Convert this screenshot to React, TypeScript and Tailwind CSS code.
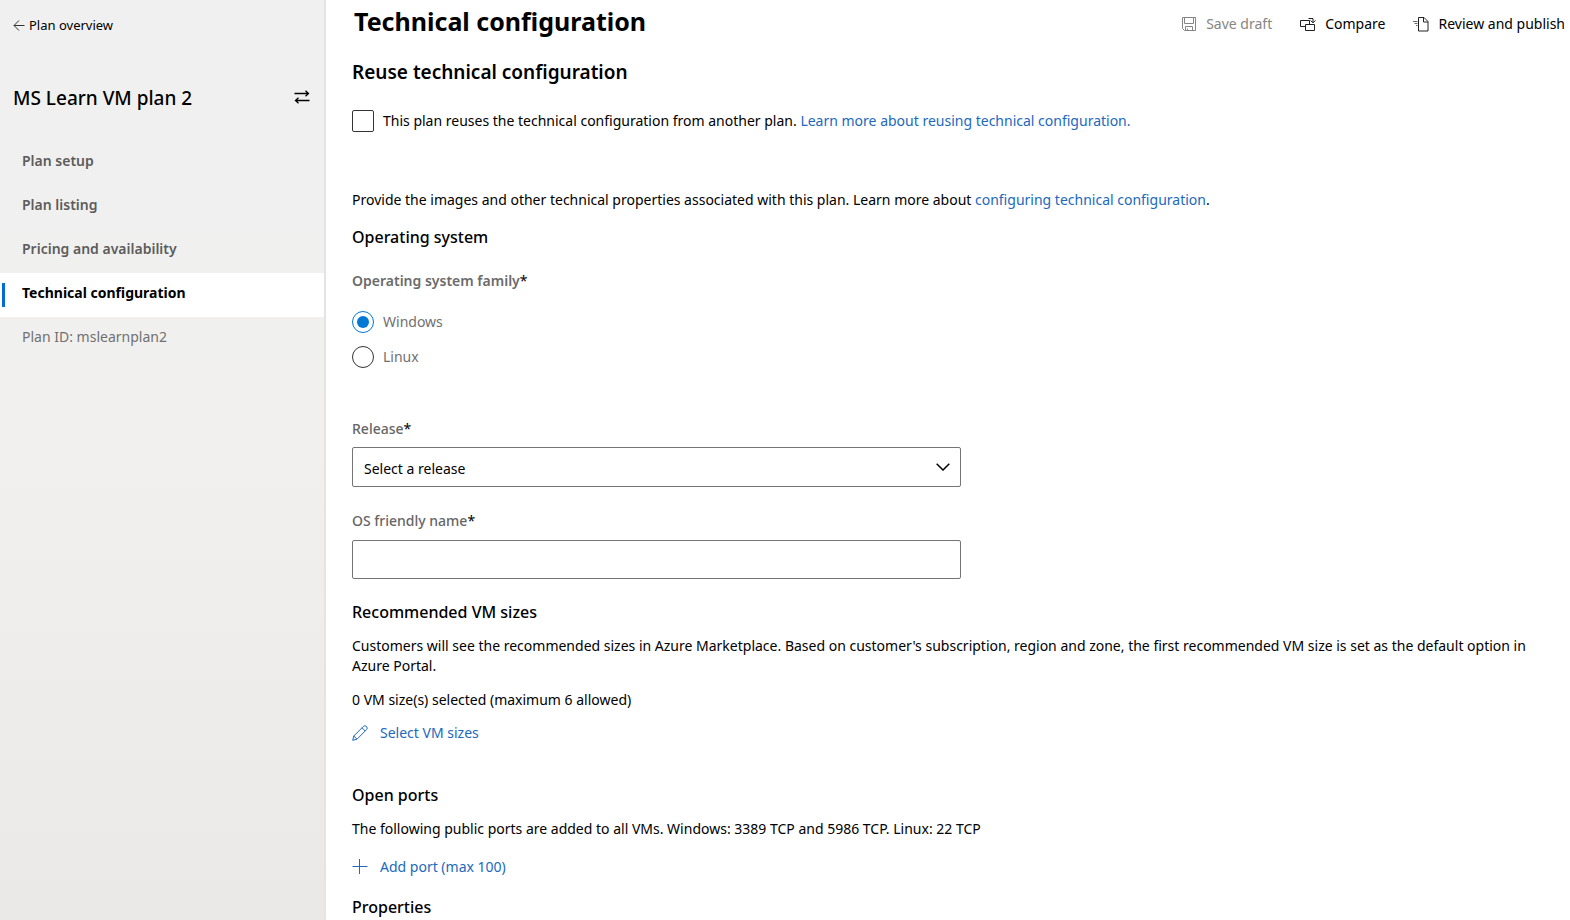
import type { ReactNode } from "react";

const linkClass = "text-[#2169bd] hover:underline";

const navItems = [
  { label: "Plan setup", active: false },
  { label: "Plan listing", active: false },
  { label: "Pricing and availability", active: false },
  { label: "Technical configuration", active: true },
];

function BackIcon() {
  return (
    <svg width="12" height="12" viewBox="0 0 12 12" fill="none" stroke="#333" strokeWidth="1" aria-hidden="true">
      <path d="M11.5 6.5H1M6 1.5l-5 5 5 5" />
    </svg>
  );
}

function SwapIcon() {
  return (
    <svg width="16" height="14" viewBox="0 0 16 14" fill="none" stroke="#000" strokeWidth="1.3" aria-hidden="true">
      <path d="M.5 3.5h14M11.5 .7l3 2.8-3 2.8M15.5 10.5h-14M4.5 7.7l-3 2.8 3 2.8" />
    </svg>
  );
}

function SaveIcon() {
  return (
    <svg width="15" height="15" viewBox="0 0 15 15" fill="none" stroke="#858585" strokeWidth="1" aria-hidden="true">
      <path d="M.5 .5h13v13h-11l-2-2zM2.5 .5v6h9v-6M3.500 13.500v-4h7v4M5.500 11.500v2" />
    </svg>
  );
}

function CompareIcon() {
  return (
    <svg width="16" height="15" viewBox="0 0 16 15" fill="none" stroke="#222" strokeWidth="1" aria-hidden="true">
      <path d="M9.500 7v-3.500h-9v6h5M5.500 7.500h9v6h-9zM8.500 1.500h4.500v4M10.500 3.500l2.500 2.200 2.500-2.200" />
    </svg>
  );
}

function PublishIcon() {
  return (
    <svg width="16" height="15" viewBox="0 0 16 15" fill="none" stroke="#222" strokeWidth="1" aria-hidden="true">
      <path d="M5.500 .5h5.500l4 4v9.500h-9.500zM10.500 .5v4.500h4.500" />
      <path d="M0 4.500h4.500M1.500 6.500h3M3 8.500h1.500" stroke="#666" />
    </svg>
  );
}

function PencilIcon() {
  return (
    <svg width="16" height="16" viewBox="0 0 16 16" fill="none" stroke="#2169bd" strokeWidth="1" strokeLinejoin="round" aria-hidden="true">
      <path d="M.7 15.300l1.100-4.300L11.300 1.500a2.200 2.200 0 0 1 3.200 3.200L5 14.200zM10 2.800L13.200 6M1.800 11L5 14.200" />
    </svg>
  );
}

function PlusIcon() {
  return (
    <svg width="16" height="16" viewBox="0 0 16 16" fill="none" stroke="#2169bd" strokeWidth="1" aria-hidden="true">
      <path d="M.5 7.500h15M7.500 0v15" />
    </svg>
  );
}

function SectionTitle({ children, className = "" }: { children: ReactNode; className?: string }) {
  return <h3 className={`text-base leading-5 font-medium ${className}`}>{children}</h3>;
}

function Required() {
  return <span className="font-normal text-black">*</span>;
}

function Radio({ label, checked = false }: { label: string; checked?: boolean }) {
  return (
    <label className="flex items-center gap-[9px] text-[#707070]">
      <input
        type="radio"
        name="os-family"
        defaultChecked={checked}
        className="size-[22px] shrink-0 appearance-none rounded-full border border-[#333] bg-white checked:border-[#0078d4] checked:bg-[#0078d4] checked:bg-clip-content checked:p-1"
      />
      {label}
    </label>
  );
}

export default function App() {
  return (
    <div className="flex min-h-screen bg-white font-['Noto_Sans',sans-serif] text-sm leading-5 text-black">
      <aside className="flex w-[326px] shrink-0 flex-col border-r-2 border-[#e4e4e4] bg-linear-to-b from-[#f0f0f0] via-[#f1f0ef] to-[#ebe9e8]">
        <a href="#overview" className="mt-[15px] ml-[13px] flex items-center gap-1 self-start text-[13px]">
          <BackIcon />
          Plan overview
        </a>
        <div className="mt-[49px] flex items-center justify-between pr-[14px] pl-[13px]">
          <h2 className="text-[19px] leading-7 font-medium">MS Learn VM plan 2</h2>
          <button type="button" aria-label="Switch plan" className="pb-[2px]">
            <SwapIcon />
          </button>
        </div>
        <nav className="mt-[29px] flex flex-col">
          {navItems.map((item) =>
            item.active ? (
              <a
                key={item.label}
                href="#technical"
                aria-current="page"
                className="flex h-11 items-center gap-[17px] bg-white pb-1 pl-[2px] font-bold"
              >
                <span className="mt-1 h-6 w-[3px] bg-[#006cd8]" />
                {item.label}
              </a>
            ) : (
              <a key={item.label} href="#plan" className="flex h-11 items-center pb-1 pl-[22px] font-semibold text-[#5c5c5c]">
                {item.label}
              </a>
            ),
          )}
          <p className="flex h-11 items-center pb-1 pl-[22px] text-[#707070]">Plan ID: mslearnplan2</p>
        </nav>
      </aside>

      <main className="min-w-0 flex-1 pr-[5px] pl-[26px]">
        <header className="flex items-center justify-between pt-[3px]">
          <h1 className="pl-[2px] text-[25px] leading-9 font-bold">Technical configuration</h1>
          <div className="flex items-center gap-7 pt-[6px]">
            <button type="button" disabled className="flex items-center gap-[9px] text-[#858585]">
              <SaveIcon />
              Save draft
            </button>
            <button type="button" className="flex items-center gap-[9px]">
              <CompareIcon />
              Compare
            </button>
            <button type="button" className="flex items-center gap-[9px]">
              <PublishIcon />
              Review and publish
            </button>
          </div>
        </header>

        <h2 className="mt-[19px] text-[19px] leading-7 font-semibold">Reuse technical configuration</h2>
        <div className="mt-6 flex items-center gap-[9px]">
          <input
            id="reuse"
            type="checkbox"
            className="size-[22px] shrink-0 appearance-none rounded-xs border border-[#333] bg-white checked:bg-[#0078d4]"
          />
          <p>
            <label htmlFor="reuse">This plan reuses the technical configuration from another plan.</label>{" "}
            <a href="#reuse-help" className={linkClass}>
              Learn more about reusing technical configuration.
            </a>
          </p>
        </div>

        <p className="mt-[58px]">
          Provide the images and other technical properties associated with this plan. Learn more about{" "}
          <a href="#configure-help" className={linkClass}>
            configuring technical configuration
          </a>
          .
        </p>

        <SectionTitle className="mt-[17px]">Operating system</SectionTitle>
        <fieldset className="mt-6">
          <legend className="font-semibold text-[#6b6b6b]">
            Operating system family
            <Required />
          </legend>
          <div className="flex flex-col items-start gap-[13px] pt-5">
            <Radio label="Windows" checked />
            <Radio label="Linux" />
          </div>
        </fieldset>

        <div className="mt-[51px] flex max-w-[609px] flex-col">
          <label htmlFor="release" className="font-medium text-[#666]">
            Release
            <Required />
          </label>
          <div className="relative mt-2">
            <select
              id="release"
              className="h-10 w-full appearance-none rounded-xs border border-[#757575] bg-white pt-[3px] pr-10 pl-[11px]"
            >
              <option>Select a release</option>
            </select>
            <svg
              width="14"
              height="8"
              viewBox="0 0 14 8"
              fill="none"
              stroke="#000"
              strokeWidth="1.5"
              className="pointer-events-none absolute top-4 right-[11px]"
              aria-hidden="true"
            >
              <path d="M.7 .7L7 7l6.300-6.300" />
            </svg>
          </div>
          <label htmlFor="os-name" className="mt-6 font-medium text-[#666]">
            OS friendly name
            <Required />
          </label>
          <input id="os-name" type="text" className="mt-[9px] h-[39px] w-full rounded-xs border border-[#757575] px-[11px]" />
        </div>

        <SectionTitle className="mt-[23px]">Recommended VM sizes</SectionTitle>
        <p className="mt-[14px]">
          Customers will see the recommended sizes in Azure Marketplace. Based on customer's subscription, region and
          zone, the first recommended VM size is set as the default option in Azure Portal.
        </p>
        <p className="mt-[14px]">0 VM size(s) selected (maximum 6 allowed)</p>
        <button type="button" className="mt-[13px] flex items-center gap-3 text-[#2169bd]">
          <PencilIcon />
          Select VM sizes
        </button>

        <SectionTitle className="mt-[42px]">Open ports</SectionTitle>
        <p className="mt-[14px]">
          The following public ports are added to all VMs. Windows: 3389 TCP and 5986 TCP. Linux: 22 TCP
        </p>
        <button type="button" className="mt-[18px] flex items-center gap-3 text-[#2169bd]">
          <PlusIcon />
          Add port (max 100)
        </button>

        <SectionTitle className="mt-5">Properties</SectionTitle>
      </main>
    </div>
  );
}
